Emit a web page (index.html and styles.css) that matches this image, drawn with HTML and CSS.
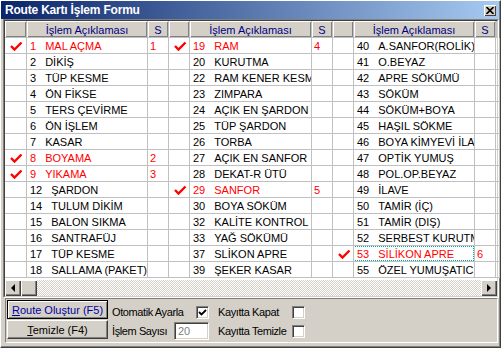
FILE: index.html
```html
<!DOCTYPE html>
<html lang="tr">
<head>
    <meta charset="UTF-8">
    <title>Route Kartı İşlem Formu</title>
    <link rel="stylesheet" href="styles.css">
</head>
<body>
    <div class="window">
        <div class="titlebar">
            <span class="title">Route Kartı İşlem Formu</span>
            <span class="close-btn">
                <svg width="8" height="7" viewBox="0 0 8 7"><path d="M0.5 0L7.5 7M7.5 0L0.5 7" stroke="#000" stroke-width="1.6"/></svg>
            </span>
        </div>

        <div class="grid">
            <div class="grid-inner">
                <div class="grid-head">
                    <div class="head-cell"></div>
                    <div class="head-cell">İşlem Açıklaması</div>
                    <div class="head-cell">S</div>
                    <div class="head-cell"></div>
                    <div class="head-cell">İşlem Açıklaması</div>
                    <div class="head-cell">S</div>
                    <div class="head-cell"></div>
                    <div class="head-cell">İşlem Açıklaması</div>
                    <div class="head-cell">S</div>
                    <div class="head-cell"></div>
                </div>
                <div class="grid-body" id="grid-body">
                    <!-- rows are built below -->
                </div>
                <div class="hscroll">
                    <div class="sb-btn"><span class="arrow-left"></span></div>
                    <div class="sb-thumb"></div>
                    <div class="sb-track"></div>
                    <div class="sb-btn"><span class="arrow-right"></span></div>
                </div>
            </div>
        </div>

        <div class="panel">
            <div class="buttons">
                <button class="btn btn-default"><u>R</u>oute Oluştur (F5)</button>
                <button class="btn"><u>T</u>emizle (F4)</button>
            </div>
            <div class="options">
                <span class="opt-label">Otomatik Ayarla</span>
                <span class="checkbox">
                    <svg width="9" height="9" viewBox="0 0 9 9"><path d="M1 4L3.5 6.5L8 2" fill="none" stroke="#000" stroke-width="1.8"/></svg>
                </span>
                <span></span>
                <span class="opt-label">Kayıtta Kapat</span>
                <span class="checkbox"></span>

                <span class="opt-label">İşlem Sayısı</span>
                <span class="edit">20</span>
                <span></span>
                <span class="opt-label">Kayıtta Temizle</span>
                <span class="checkbox"></span>
            </div>
        </div>
    </div>

    <script>
        // [no, description, order] - order > 0 means the step is selected
        const columns = [
            [
                [1, "MAL AÇMA", 1], [2, "DİKİŞ", 0], [3, "TÜP KESME", 0], [4, "ÖN FİKSE", 0],
                [5, "TERS ÇEVİRME", 0], [6, "ÖN İŞLEM", 0], [7, "KASAR", 0], [8, "BOYAMA", 2],
                [9, "YIKAMA", 3], [12, "ŞARDON", 0], [14, "TULUM DİKİM", 0], [15, "BALON SIKMA", 0],
                [16, "SANTRAFÜJ", 0], [17, "TÜP KESME", 0], [18, "SALLAMA (PAKET)", 0]
            ],
            [
                [19, "RAM", 4], [20, "KURUTMA", 0], [22, "RAM KENER KESME", 0], [23, "ZIMPARA", 0],
                [24, "AÇIK EN ŞARDON", 0], [25, "TÜP ŞARDON", 0], [26, "TORBA", 0], [27, "AÇIK EN SANFOR", 0],
                [28, "DEKAT-R ÜTÜ", 0], [29, "SANFOR", 5], [30, "BOYA SÖKÜM", 0], [32, "KALİTE KONTROL", 0],
                [33, "YAĞ SÖKÜMÜ", 0], [37, "SLİKON APRE", 0], [39, "ŞEKER KASAR", 0]
            ],
            [
                [40, "A.SANFOR(ROLİK)", 0], [41, "O.BEYAZ", 0], [42, "APRE SÖKÜMÜ", 0], [43, "SÖKÜM", 0],
                [44, "SÖKÜM+BOYA", 0], [45, "HAŞIL SÖKME", 0], [46, "BOYA KİMYEVİ İLAVE", 0], [47, "OPTİK YUMUŞ", 0],
                [48, "POL.OP.BEYAZ", 0], [49, "İLAVE", 0], [50, "TAMİR (İÇ)", 0], [51, "TAMİR (DIŞ)", 0],
                [52, "SERBEST KURUTMA", 0], [53, "SİLİKON APRE", 6], [55, "ÖZEL YUMUŞATICI", 0]
            ]
        ];

        const tick = '<svg width="13" height="11" viewBox="0 0 13 11"><path d="M1 5L4.5 8.5L11.5 1.5" fill="none" stroke="#f00" stroke-width="2.4"/></svg>';
        const body = document.getElementById('grid-body');

        for (let i = 0; i < 15; i++) {
            const row = document.createElement('div');
            row.className = 'grid-row';
            let html = '';
            columns.forEach((col, c) => {
                const [no, name, order] = col[i];
                const sel = order > 0 ? ' selected' : '';
                const focus = (c === 2 && no === 53) ? ' focused' : '';
                html += `<div class="cell check-cell">${order ? tick : ''}</div>`;
                html += `<div class="cell name-cell${sel}${focus}"><span class="num">${no}</span>${name}</div>`;
                html += `<div class="cell s-cell${sel}">${order || ''}</div>`;
            });
            html += '<div class="cell"></div>';
            row.innerHTML = html;
            body.appendChild(row);
        }
    </script>
</body>
</html>
```

FILE: styles.css
```css
:root {
    --face: #d4d0c8;
    --shadow: #808080;
    --dark: #404040;
    --gridline: #c0c0c0;
}

body {
    margin: 0;
    font-family: "Liberation Sans", Arial, sans-serif;
    font-size: 11px;
    color: #000;
}

.window {
    width: 501px;
    height: 348px;
    box-sizing: border-box;
    background-color: var(--face);
    border-top: 1px solid #fff;
    border-left: 1px solid #fff;
    border-right: 1px solid var(--dark);
    border-bottom: 1px solid var(--dark);
    box-shadow: inset -1px -1px var(--shadow);
}

/* title bar */
.titlebar {
    width: 498px;
    height: 18px;
    display: flex;
    align-items: center;
    background: linear-gradient(to right, #0a246a, #a6caf0);
}

.title {
    padding-left: 4px;
    color: #fff;
    font-weight: bold;
    font-size: 12px;
    letter-spacing: -0.2px;
}

.close-btn {
    margin-left: auto;
    margin-right: 3px;
    width: 12px;
    height: 11px;
    display: flex;
    align-items: center;
    justify-content: center;
    background-color: var(--face);
    box-shadow: inset 1px 1px #fff, inset -1px -1px var(--dark);
}

/* string grid */
.grid {
    margin-left: 2px;
    width: 496px;
    height: 279px;
    box-sizing: border-box;
    border: 1px solid;
    border-color: var(--shadow) #fff #fff var(--shadow);
}

.grid-inner {
    height: 100%;
    box-sizing: border-box;
    border: 1px solid;
    border-color: var(--dark) var(--face) var(--face) var(--dark);
    background-color: #fff;
}

.grid-head,
.grid-row {
    display: grid;
    grid-template-columns: 22px 121px 21px 21px 122px 21px 21px 121px 21px 1fr;
}

.grid-head {
    height: 17px;
}

.head-cell {
    box-sizing: border-box;
    border-right: 1px solid var(--gridline);
    border-bottom: 1px solid var(--gridline);
    background-color: var(--face);
    box-shadow: inset 1px 1px #fff, inset -1px -1px var(--shadow);
    color: #000080;
    text-align: center;
    line-height: 13px;
    padding-top: 3px;
    white-space: nowrap;
    overflow: hidden;
}

.grid-row {
    height: 16px;
}

.cell {
    position: relative;
    box-sizing: border-box;
    border-right: 1px solid var(--gridline);
    border-bottom: 1px solid var(--gridline);
    padding: 2px 0 0 3px;
    line-height: 13px;
    white-space: nowrap;
    overflow: hidden;
}

.check-cell {
    padding: 3px 0 0 5px;
}

.check-cell svg {
    display: block;
}

.s-cell {
    padding-left: 2px;
}

.num {
    padding-right: 9px;
}

.selected {
    color: #f00;
}

.focused::after {
    content: '';
    position: absolute;
    top: 0;
    left: -1px;
    right: 0;
    bottom: 0;
    border: 1px dotted #00a8a8;
}

/* horizontal scroll bar */
.hscroll {
    margin-top: 2px;
    height: 16px;
    display: flex;
}

.sb-btn,
.sb-thumb {
    width: 16px;
    height: 16px;
    display: flex;
    align-items: center;
    justify-content: center;
    background-color: var(--face);
    box-shadow: inset 1px 1px #fff, inset -1px -1px var(--dark), inset -2px -2px var(--shadow);
}

.sb-track {
    flex: 1;
    background: repeating-conic-gradient(#fff 0 25%, var(--face) 0 50%) 0 0 / 2px 2px;
}

.arrow-left {
    border-right: 4px solid #000;
    border-top: 4px solid transparent;
    border-bottom: 4px solid transparent;
}

.arrow-right {
    border-left: 4px solid #000;
    border-top: 4px solid transparent;
    border-bottom: 4px solid transparent;
}

/* bottom panel */
.panel {
    margin-left: 4px;
    width: 493px;
    height: 45px;
    box-sizing: border-box;
    border: 1px solid;
    border-color: var(--shadow) #fff #fff var(--shadow);
    display: flex;
}

.buttons {
    margin: 1px 0 0 1px;
    display: flex;
    flex-direction: column;
    gap: 1px;
}

.btn {
    width: 101px;
    height: 19px;
    padding: 0;
    font-family: inherit;
    font-size: 11px;
    background-color: var(--face);
    border: 1px solid;
    border-color: #fff var(--dark) var(--dark) #fff;
    box-shadow: inset -1px -1px var(--shadow);
}

.btn-default {
    color: #0000a0;
    border-color: #000;
    box-shadow: inset 1px 1px #fff, inset -1px -1px var(--shadow);
}

.options {
    margin-left: 4px;
    padding-top: 4px;
    display: grid;
    grid-template-columns: 62px 35px 9px 74px 13px;
    grid-template-rows: 18px 18px;
    row-gap: 1px;
    align-items: center;
}

.opt-label {
    white-space: nowrap;
    letter-spacing: -0.4px;
}

.checkbox {
    justify-self: end;
    width: 13px;
    height: 13px;
    box-sizing: border-box;
    border: 1px solid;
    border-color: var(--shadow) #fff #fff var(--shadow);
    box-shadow: inset 1px 1px var(--dark), inset -1px -1px var(--face);
    background-color: #fff;
    display: flex;
    align-items: center;
    justify-content: center;
}

.edit {
    height: 18px;
    box-sizing: border-box;
    border: 1px solid;
    border-color: var(--shadow) #fff #fff var(--shadow);
    box-shadow: inset 1px 1px var(--dark), inset -1px -1px var(--face);
    background-color: #fff;
    color: var(--shadow);
    padding: 2px 0 0 3px;
    line-height: 13px;
}
```
